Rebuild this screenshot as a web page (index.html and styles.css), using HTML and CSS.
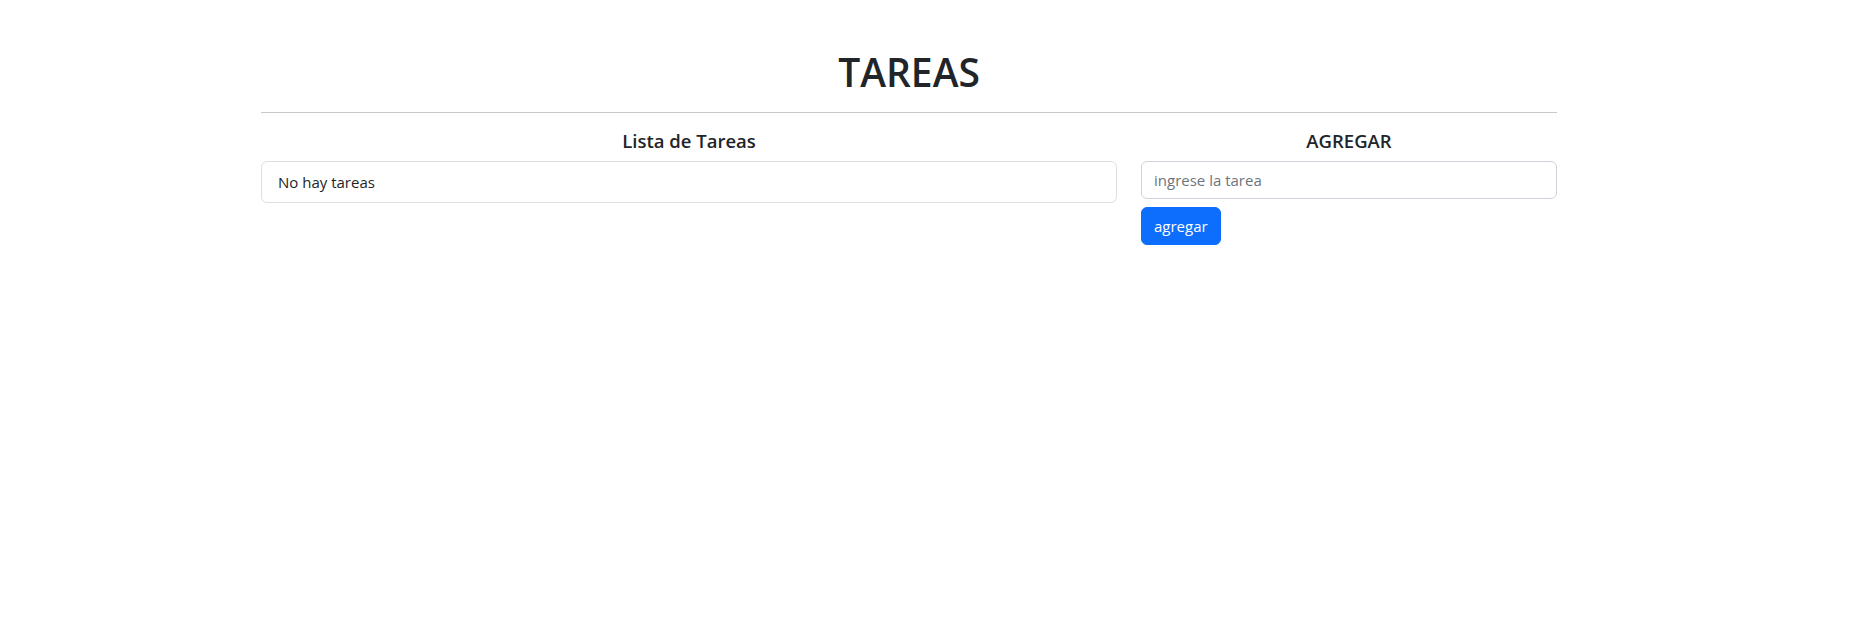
FILE: index.html
```html
<!DOCTYPE html>
<html lang="es">
<head>
<meta charset="utf-8">
<title>Tareas</title>
<link rel="stylesheet" href="styles.css">
</head>
<body>
<div class="container">
  <h1 class="title">TAREAS</h1>
  <hr class="divider">
  <div class="row">
    <div class="col-8">
      <h5 class="section-title">Lista de Tareas</h5>
      <ul class="list-group">
        <li class="list-group-item">No hay tareas</li>
      </ul>
    </div>
    <div class="col-4">
      <h5 class="section-title">AGREGAR</h5>
      <form class="add-form">
        <input class="form-control" type="text" placeholder="ingrese la tarea">
        <button class="btn-primary" type="button">agregar</button>
      </form>
    </div>
  </div>
</div>
</body>
</html>
```
FILE: styles.css
```css
* { box-sizing: border-box; }
body {
  margin: 0;
  font-family: "Open Sans", "Noto Sans", sans-serif;
  font-size: 15px;
  line-height: 24px;
  color: #212529;
  background: #fff;
}
.container {
  width: 1320px;
  margin-left: 249px;
  padding: 48px 12px 0;
}
.title {
  margin: 0 0 8px;
  font-size: 39px;
  font-weight: 600;
  line-height: 48px;
  text-align: center;
}
.divider {
  margin: 16px 0;
  border: 0;
  border-top: 1px solid #212529;
  opacity: .25;
  color: inherit;
}
.row {
  display: flex;
  margin: 0 -12px;
}
.col-8 { flex: 0 0 66.66667%; padding: 0 12px; }
.col-4 { flex: 0 0 33.33333%; padding: 0 12px; }
.section-title {
  margin: 0 0 8px;
  font-size: 18.5px;
  font-weight: 600;
  line-height: 24px;
  text-align: center;
}
.list-group {
  list-style: none;
  margin: 0;
  padding: 0;
  border: 1px solid rgba(0,0,0,.125);
  border-radius: 6px;
}
.list-group-item {
  padding: 8px 16px;
}
.add-form { margin: 0; }
.form-control {
  display: block;
  width: 100%;
  padding: 6px 12px;
  font: inherit;
  line-height: 24px;
  color: #212529;
  border: 1px solid #ced4da;
  border-radius: 6px;
  background: #fff;
}
.form-control::placeholder { color: #6c757d; opacity: 1; }
.btn-primary {
  margin-top: 8px;
  padding: 6px 12px;
  font: inherit;
  line-height: 24px;
  color: #fff;
  background: #0d6efd;
  border: 1px solid #0d6efd;
  border-radius: 6px;
}
```
